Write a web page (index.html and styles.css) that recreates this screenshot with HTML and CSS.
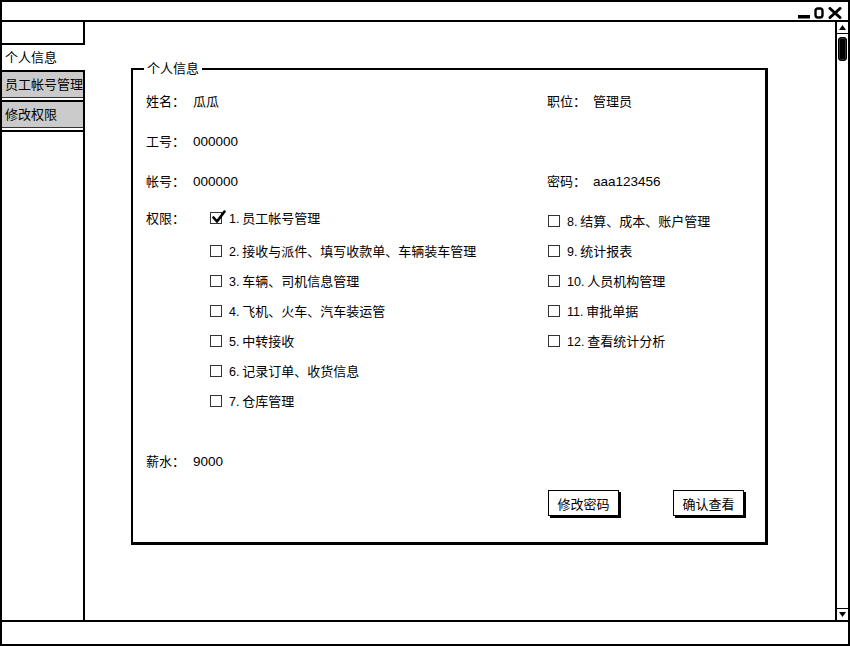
FILE: index.html
```html
<!DOCTYPE html>
<html lang="zh">
<head>
<meta charset="utf-8">
<title>个人信息</title>
<link rel="stylesheet" href="styles.css">
</head>
<body>
<div class="window">
  <div class="titlebar">
    <svg class="winctl" width="46" height="12" viewBox="0 0 46 12">
      <rect x="0" y="8" width="12" height="3.5" fill="#000"/>
      <rect x="17.5" y="1.5" width="7" height="9" rx="2.5" fill="none" stroke="#000" stroke-width="2.4"/>
      <path d="M32 1.5 L42 10.5 M42 1.5 L32 10.5" stroke="#000" stroke-width="3" stroke-linecap="round"/>
    </svg>
  </div>
  <div class="middle">
    <div class="tabs">
      <div class="tab-blank"></div>
      <div class="tab tab-active">个人信息</div>
      <div class="tab tab-gray">员工帐号管理</div>
      <div class="tab tab-gray">修改权限</div>
      <div class="tab-fill"></div>
    </div>
    <div class="content">
      <div class="panel">
        <span class="legend">个人信息</span>
        <div class="row">
          <div class="col-left"><span class="label">姓名：</span><span class="value cjk">瓜瓜</span></div>
          <div class="col-right"><span class="label">职位：</span><span class="value cjk">管理员</span></div>
        </div>
        <div class="row">
          <div class="col-left"><span class="label">工号：</span><span class="value">000000</span></div>
        </div>
        <div class="row">
          <div class="col-left"><span class="label">帐号：</span><span class="value">000000</span></div>
          <div class="col-right"><span class="label">密码：</span><span class="value">aaa123456</span></div>
        </div>
        <div class="perms">
          <div class="perm-left">
            <span class="perm-label">权限：</span>
            <ul class="perm-list">
              <li class="perm first"><span class="box checked"><svg width="15" height="14" viewBox="0 0 15 14"><path d="M2.5 7.5 L6 11.5 L13.5 1.5" fill="none" stroke="#000" stroke-width="2.6" stroke-linecap="round" stroke-linejoin="round"/></svg></span><span class="ptext"><span class="num">1.</span> 员工帐号管理</span></li>
              <li class="perm"><span class="box"></span><span class="ptext"><span class="num">2.</span> 接收与派件、填写收款单、车辆装车管理</span></li>
              <li class="perm"><span class="box"></span><span class="ptext"><span class="num">3.</span> 车辆、司机信息管理</span></li>
              <li class="perm"><span class="box"></span><span class="ptext"><span class="num">4.</span> 飞机、火车、汽车装运管</span></li>
              <li class="perm"><span class="box"></span><span class="ptext"><span class="num">5.</span> 中转接收</span></li>
              <li class="perm"><span class="box"></span><span class="ptext"><span class="num">6.</span> 记录订单、收货信息</span></li>
              <li class="perm"><span class="box"></span><span class="ptext"><span class="num">7.</span> 仓库管理</span></li>
            </ul>
          </div>
          <ul class="perm-list right">
            <li class="perm"><span class="box"></span><span class="ptext"><span class="num">8.</span> 结算、成本、账户管理</span></li>
            <li class="perm"><span class="box"></span><span class="ptext"><span class="num">9.</span> 统计报表</span></li>
            <li class="perm"><span class="box"></span><span class="ptext"><span class="num">10.</span> 人员机构管理</span></li>
            <li class="perm"><span class="box"></span><span class="ptext"><span class="num">11.</span> 审批单据</span></li>
            <li class="perm"><span class="box"></span><span class="ptext"><span class="num">12.</span> 查看统计分析</span></li>
          </ul>
        </div>
        <div class="row salary">
          <div class="col-left"><span class="label">薪水：</span><span class="value">9000</span></div>
        </div>
        <div class="buttons">
          <button class="btn" type="button">修改密码</button>
          <button class="btn" type="button">确认查看</button>
        </div>
      </div>
    </div>
    <div class="scrollbar">
      <div class="sb-btn"><svg width="11" height="9" viewBox="0 0 11 9"><path d="M2 7 L5.5 2 L9 7 Z" fill="#000"/></svg></div>
      <div class="sb-thumb"></div>
      <div class="sb-space"></div>
      <div class="sb-btn sb-down"><svg width="11" height="9" viewBox="0 0 11 9"><path d="M2 2 L9 2 L5.5 7 Z" fill="#000"/></svg></div>
    </div>
  </div>
  <div class="statusbar"></div>
</div>
</body>
</html>
```

FILE: styles.css
```css
* { box-sizing: border-box; }
html, body { margin: 0; padding: 0; background: #fff; }
body {
  font-family: "Noto Sans CJK SC", "Liberation Sans", sans-serif;
  font-size: 13px;
  color: #000;
}
.window {
  width: 850px;
  height: 646px;
  border: 2px solid #000;
  display: flex;
  flex-direction: column;
  background: #fff;
}
.titlebar {
  height: 20px;
  border-bottom: 2px solid #000;
  display: flex;
  justify-content: flex-end;
  align-items: center;
  padding-right: 4px;
}
.winctl { display: block; margin-top: 4px; }
.middle {
  height: 598px;
  display: flex;
}
.tabs {
  width: 83px;
  border-right: 2px solid #000;
  display: flex;
  flex-direction: column;
}
.tab-blank {
  height: 23px;
  border-bottom: 2px solid #000;
}
.tab {
  height: 26px;
  line-height: 24px;
  padding-left: 3px;
  white-space: nowrap;
  font-size: 13px;
}
.tab-active {
  background: #fff;
  margin-right: -2px;
  height: 25px;
}
.tab-gray {
  background: #cbcbcb;
  border-top: 2px solid #000;
  border-bottom: 1px solid #333;
  height: 28px;
  margin-bottom: 2px;
  padding-left: 3px;
  overflow: hidden;
}
.tab-fill {
  flex: 1;
  border-top: 2px solid #000;
}
.content {
  flex: 1;
  min-width: 0;
}
.scrollbar {
  width: 13px;
  border-left: 2px solid #000;
  display: flex;
  flex-direction: column;
}
.sb-btn {
  height: 12px;
  border-bottom: 1px solid #000;
  display: flex;
  justify-content: center;
  align-items: center;
}
.sb-down { border-bottom: none; border-top: 1px solid #000; }
.sb-thumb {
  height: 24px;
  margin: 3px 1px 0 1px;
  background: #000;
  border-radius: 3px;
  border: 1px solid #000;
  box-shadow: inset 0 0 0 1px #333;
}
.sb-space { flex: 1; }
.statusbar { flex: 1; border-top: 2px solid #000; }

.panel {
  margin: 46px 0 0 46px;
  width: 637px;
  height: 477px;
  border: 2px solid #000;
  border-right-width: 3px;
  border-bottom-width: 3px;
  padding-left: 13px;
}
.legend {
  display: block;
  width: fit-content;
  margin: -11px 0 3px -2px;
  padding: 0 3px;
  line-height: 18px;
  background: #fff;
}
.row {
  height: 40px;
  display: flex;
  align-items: center;
}
.col-left { width: 401px; display: flex; align-items: baseline; }
.col-right { display: flex; align-items: baseline; }
.col-left .label { width: 47px; }
.col-right .label { width: 46px; }
.value {
  font-family: "Liberation Sans", sans-serif;
  font-size: 13.5px;
}
.value.cjk { font-family: "Noto Sans CJK SC", sans-serif; font-size: 13px; }
.perms {
  display: flex;
  margin-top: 6px;
}
.perm-left { width: 401px; display: flex; align-items: flex-start; }
.perm-label { width: 64px; line-height: 24px; height: 24px; }
.perm-list { list-style: none; margin: 0; padding: 0; }
.perm-list.right { padding-left: 1px; }
.perm {
  height: 30px;
  display: flex;
  align-items: center;
  white-space: nowrap;
}
.perm.first { height: 24px; margin-bottom: 6px; }
.ptext { line-height: 18px; }
.box {
  width: 12px;
  height: 12px;
  border: 1.5px solid #333;
  margin-right: 7px;
  position: relative;
  flex: none;
}
.box.checked svg { position: absolute; left: 0; top: -3px; }
.num {
  font-family: "Liberation Sans", sans-serif;
  font-size: 12.5px;
}
.salary { margin-top: 24px; }
.buttons {
  display: flex;
  justify-content: flex-end;
  gap: 54px;
  padding-right: 21px;
  margin-top: 10px;
}
.btn {
  width: 71px;
  height: 26px;
  background: #fff;
  border: 1px solid #000;
  box-shadow: 2px 2px 0 #000;
  font-family: "Noto Sans CJK SC", sans-serif;
  font-size: 13px;
  padding: 0;
  color: #000;
}
```
